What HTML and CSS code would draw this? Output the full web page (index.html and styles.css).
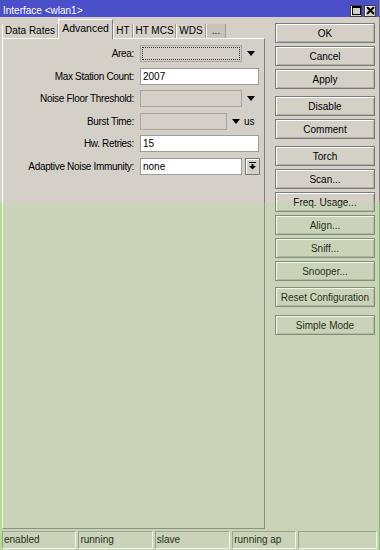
FILE: index.html
```html
<!DOCTYPE html>
<html lang="en">
<head>
    <meta charset="UTF-8">
    <title>Interface &lt;wlan1&gt;</title>
    <link rel="stylesheet" href="styles.css">
</head>
<body>
    <div class="window">
        <div class="titlebar">
            <span class="title">Interface &lt;wlan1&gt;</span>
            <div class="title-buttons">
                <span class="tbtn">
                    <svg width="9" height="9" viewBox="0 0 9 9"><rect x="0.5" y="0.5" width="8" height="8" fill="none" stroke="#000"/><line x1="0" y1="1.5" x2="9" y2="1.5" stroke="#000"/></svg>
                </span>
                <span class="tbtn">
                    <svg width="9" height="9" viewBox="0 0 9 9"><path d="M1 1 L8 8 M8 1 L1 8" stroke="#000" stroke-width="2"/></svg>
                </span>
            </div>
        </div>

        <div class="main">
            <div class="left">
                <div class="tabs">
                    <div class="tab t-rates">Data Rates</div>
                    <div class="tab active">Advanced</div>
                    <div class="tab t-ht">HT</div>
                    <div class="tab t-mcs">HT MCS</div>
                    <div class="tab t-wds">WDS</div>
                    <div class="tab more">...</div>
                </div>

                <div class="panel">
                    <div class="row">
                        <label>Area:</label>
                        <div class="field grey w102"><span class="focus"></span></div>
                        <span class="arrow"></span>
                    </div>
                    <div class="row">
                        <label>Max Station Count:</label>
                        <div class="field w119">2007</div>
                    </div>
                    <div class="row">
                        <label>Noise Floor Threshold:</label>
                        <div class="field grey w102"></div>
                        <span class="arrow"></span>
                    </div>
                    <div class="row">
                        <label>Burst Time:</label>
                        <div class="field grey w87"></div>
                        <span class="arrow"></span>
                        <span class="unit">us</span>
                    </div>
                    <div class="row">
                        <label>Hw. Retries:</label>
                        <div class="field w119">15</div>
                    </div>
                    <div class="row">
                        <label>Adaptive Noise Immunity:</label>
                        <div class="field w102">none</div>
                        <span class="drop-btn">
                            <svg width="7" height="8" viewBox="0 0 7 8"><rect x="0" y="0" width="7" height="1" fill="#000"/><rect x="2.5" y="2" width="2" height="2" fill="#000"/><path d="M0 4 H7 L3.5 7.5 Z" fill="#000"/></svg>
                        </span>
                    </div>
                </div>
            </div>

            <div class="buttons">
                <div class="group">
                    <button>OK</button>
                    <button>Cancel</button>
                    <button>Apply</button>
                </div>
                <div class="group">
                    <button>Disable</button>
                    <button>Comment</button>
                </div>
                <div class="group">
                    <button>Torch</button>
                    <button>Scan...</button>
                    <button>Freq. Usage...</button>
                    <button>Align...</button>
                    <button>Sniff...</button>
                    <button>Snooper...</button>
                </div>
                <div class="group reset">
                    <button>Reset Configuration</button>
                </div>
                <div class="group simple">
                    <button>Simple Mode</button>
                </div>
            </div>
        </div>

        <div class="statusbar">
            <div class="cell c1">enabled</div>
            <div class="cell c2">running</div>
            <div class="cell c3">slave</div>
            <div class="cell c4">running ap</div>
            <div class="cell c5"></div>
        </div>

        <!-- highlighted area over the lower part of the window -->
        <div class="highlight"></div>
    </div>
</body>
</html>
```

FILE: styles.css
```css
* {
    margin: 0;
    padding: 0;
    box-sizing: border-box;
}

body {
    font-family: 'Liberation Sans', Arial, sans-serif;
    font-size: 10px;
    color: #000;
    background: #d4d0c8;
}

.window {
    position: relative;
    width: 380px;
    height: 550px;
    display: flex;
    flex-direction: column;
    background: #d4d0c8;
    border-right: 1px solid #808080;
}

.titlebar {
    height: 17px;
    background: #4b4fc9;
    display: flex;
    align-items: center;
    justify-content: space-between;
    padding: 0 3px 0 3px;
}

.title {
    color: #fff;
    font-size: 10px;
    padding-top: 3px;
}

.title-buttons {
    display: flex;
    gap: 2px;
    padding-top: 4px;
}

.tbtn {
    width: 12px;
    height: 12px;
    background: #d4d0c8;
    border: 1px solid #404040;
    box-shadow: inset 1px 1px #fff;
    display: flex;
    align-items: center;
    justify-content: center;
}

.main {
    flex: 1;
    display: flex;
    padding: 2px 0 2px 2px;
}

.left {
    width: 263px;
    display: flex;
    flex-direction: column;
}

.tabs {
    height: 19px;
    display: flex;
    align-items: flex-end;
}

.tab {
    height: 14px;
    line-height: 13px;
    text-align: center;
    border-left: 1px solid #fff;
    border-right: 1px solid #a09c94;
    white-space: nowrap;
}

.t-rates { width: 56px; }
.t-ht { width: 20px; }
.t-mcs { width: 43px; }
.t-wds { width: 30px; }

.tab.active {
    position: relative;
    width: 55px;
    height: 20px;
    line-height: 16px;
    margin-bottom: -1px;
    border-top: 1px solid #fff;
    border-right: 1px solid #808080;
    background: #d4d0c8;
    font-size: 10.5px;
}

.tab.more {
    width: 20px;
    background: #c8c4bc;
}

.panel {
    flex: 1;
    border-top: 1px solid #fff;
    border-left: 1px solid #fff;
    border-right: 1px solid #808080;
    border-bottom: 1px solid #808080;
    padding-top: 6px;
    display: flex;
    flex-direction: column;
    gap: 5.6px;
}

.row {
    display: flex;
    align-items: center;
    height: 17px;
}

.row label {
    width: 131px;
    text-align: right;
    margin-right: 6px;
    letter-spacing: -0.32px;
}

.field {
    height: 17px;
    line-height: 15px;
    padding-left: 2px;
    background: #fff;
    border: 1px solid #9c9c9c;
    position: relative;
}

.field.grey {
    background: #d4d0c8;
    border-color: #a8a4a0;
}

.w87 { width: 87px; }
.w102 { width: 102px; }
.w119 { width: 119px; }

.focus {
    position: absolute;
    top: 1px;
    left: 1px;
    right: 1px;
    bottom: 1px;
    border: 1px dotted #333;
}

.arrow {
    width: 0;
    height: 0;
    margin-left: 5px;
    border-left: 4.5px solid transparent;
    border-right: 4.5px solid transparent;
    border-top: 5px solid #000;
}

.unit {
    margin-left: 4px;
}

.drop-btn {
    width: 15px;
    height: 17px;
    margin-left: 3px;
    border: 1px solid #7a7a7a;
    box-shadow: inset 1px 1px #fff;
    display: flex;
    align-items: center;
    justify-content: center;
}

.buttons {
    width: 100px;
    margin-left: 10px;
    padding-top: 4px;
    display: flex;
    flex-direction: column;
    gap: 7px;
}

.group {
    display: flex;
    flex-direction: column;
    gap: 3px;
}

.group.reset {
    margin-top: -1px;
}

.group.simple {
    margin-top: 1px;
}

.buttons button {
    height: 20px;
    width: 100px;
    font-family: 'Liberation Sans', Arial, sans-serif;
    font-size: 10px;
    color: #000;
    background: #d4d0c8;
    border: 1px solid #7a7a7a;
    box-shadow: inset 1px 1px #fff, inset -1px -1px #b4b0a8;
}

.statusbar {
    height: 19px;
    display: flex;
    gap: 2px;
    padding: 0 2px 1px 2px;
}

.cell {
    height: 18px;
    line-height: 16px;
    padding-left: 1px;
    border-top: 1px solid #9a968e;
    border-left: 1px solid #9a968e;
    border-bottom: 1px solid #fff;
    border-right: 1px solid #fff;
    white-space: nowrap;
}

.c1 { width: 75px; }
.c2 { width: 75px; }
.c3 { width: 76px; }
.c4 { width: 64px; }
.c5 { width: 80px; }

.highlight {
    position: absolute;
    top: 202px;
    left: 0;
    right: -1px;
    bottom: 0;
    background: rgba(167, 223, 125, 0.2);
    border-left: 2px solid rgba(150, 230, 110, 0.5);
    border-right: 2px solid rgba(150, 230, 110, 0.5);
    pointer-events: none;
}
```
